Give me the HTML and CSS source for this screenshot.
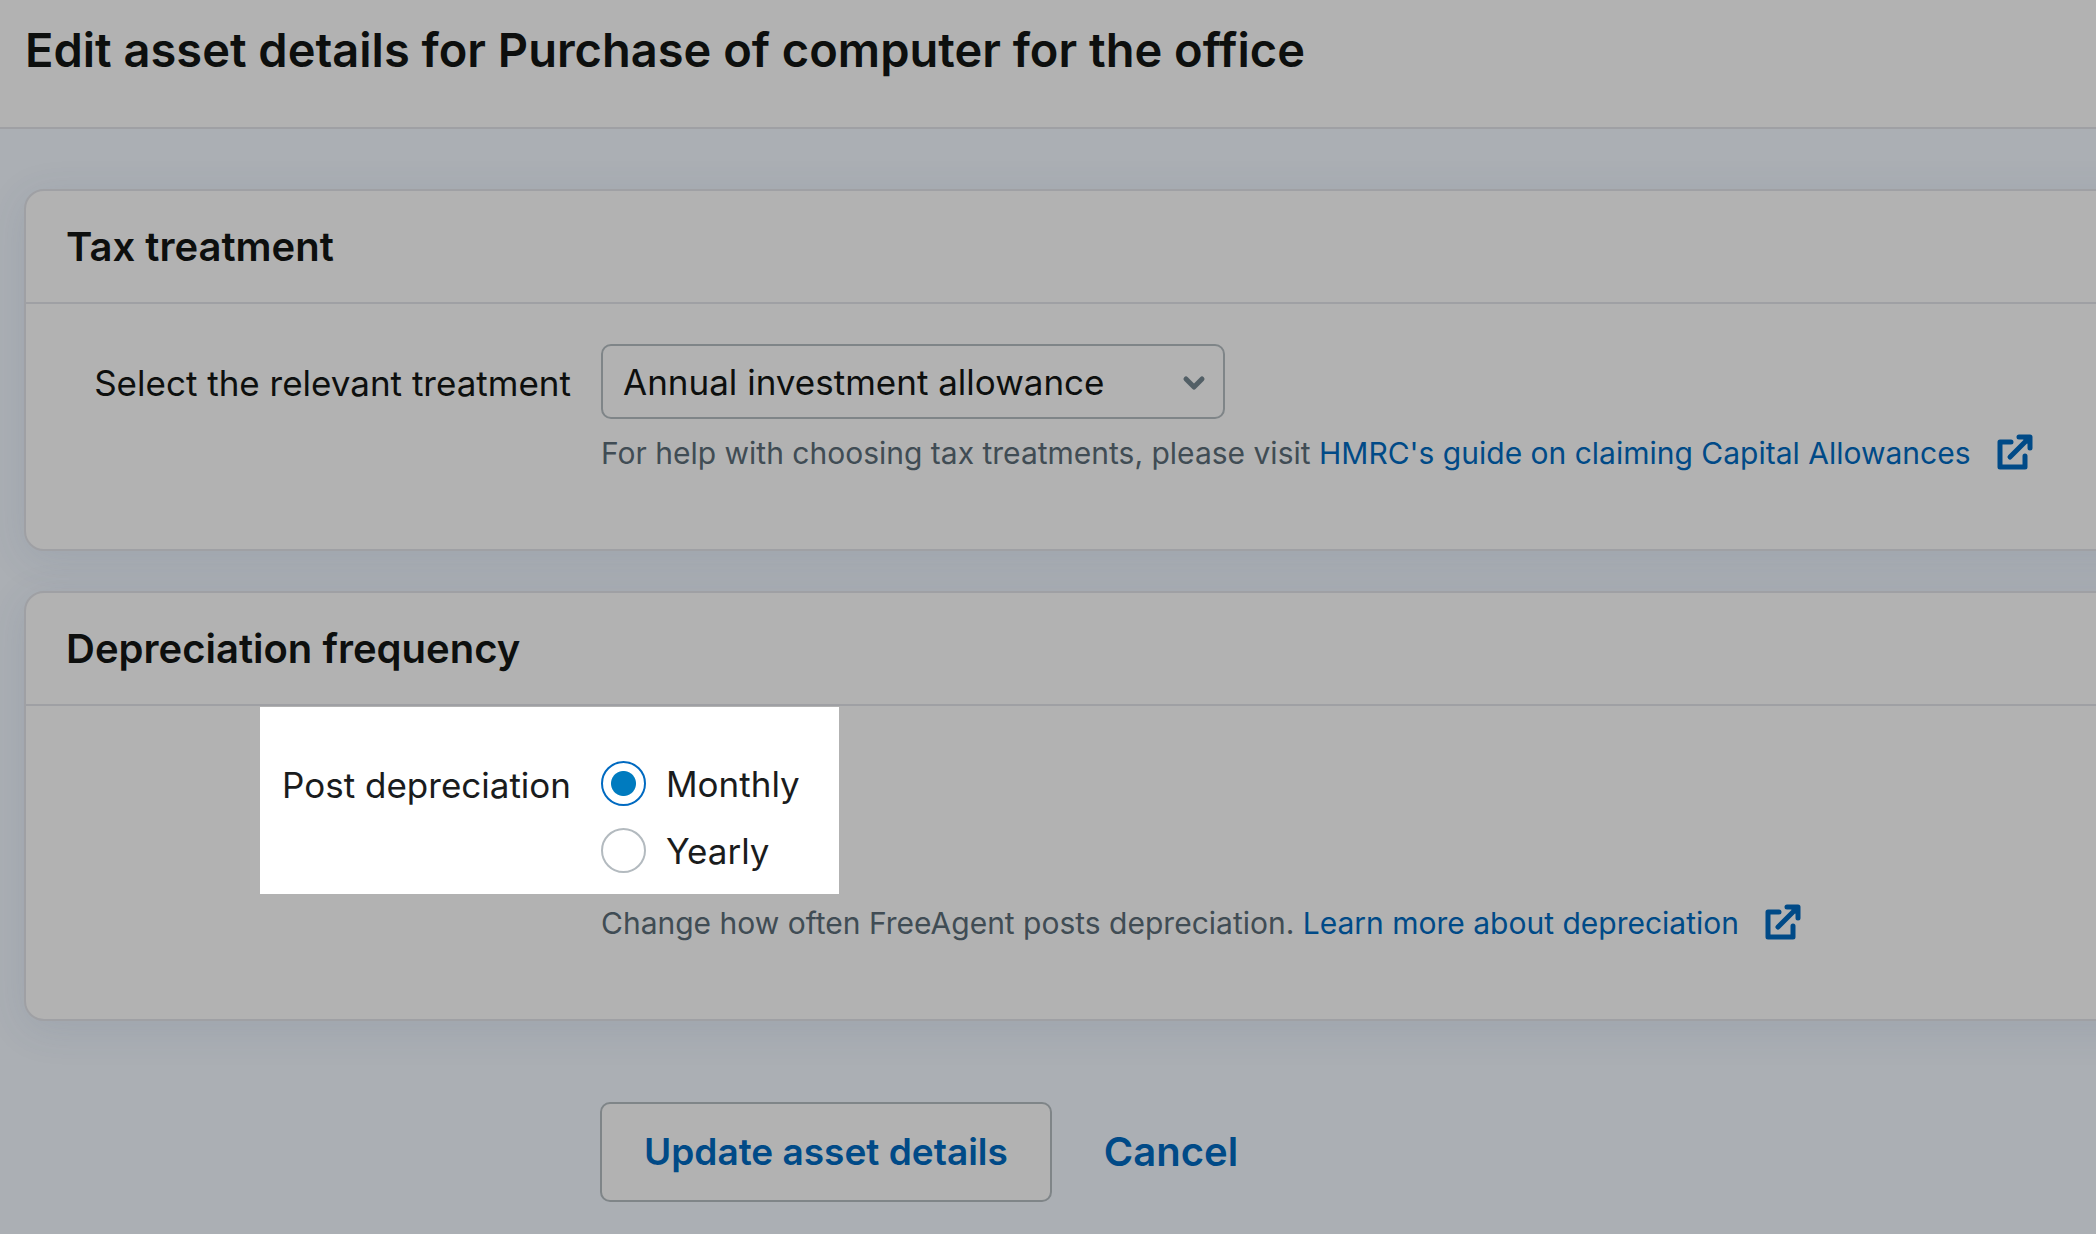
FILE: index.html
```html
<!DOCTYPE html>
<html lang="en">
<head>
    <meta charset="UTF-8">
    <meta name="viewport" content="width=device-width, initial-scale=1.0">
    <title>Edit asset details</title>
    <link rel="stylesheet" href="styles.css">
</head>
<body>
    <header class="page-header">
        <h1>Edit asset details for Purchase of computer for the office</h1>
    </header>

    <form class="asset-form">
        <section class="card">
            <h2>Tax treatment</h2>
            <div class="card-body first">
                <div class="row">
                    <label for="treatment">Select the relevant treatment</label>
                    <div class="select">
                        <select id="treatment">
                            <option>Annual investment allowance</option>
                        </select>
                        <svg class="chevron" width="24" height="16" viewBox="0 0 24 16"><path d="M4 4l8 8 8-8"/></svg>
                    </div>
                </div>
                <p class="help">
                    For help with choosing tax treatments, please visit
                    <a href="#">HMRC's guide on claiming Capital Allowances<svg class="external" width="36" height="36" viewBox="0 0 36 36"><path d="M14 8H3V33H28V22M13 23L30 6M22 3H33V14"/><path class="tip" d="M24 3h9v9z"/></svg></a>
                </p>
            </div>
        </section>

        <section class="card">
            <h2>Depreciation frequency</h2>
            <div class="card-body">
                <div class="highlight" role="radiogroup" aria-labelledby="post">
                    <span id="post" class="group-label">Post depreciation</span>
                    <div class="options">
                        <label><input type="radio" name="frequency" checked>Monthly</label>
                        <label><input type="radio" name="frequency">Yearly</label>
                    </div>
                </div>
                <p class="help">
                    Change how often FreeAgent posts depreciation.
                    <a href="#">Learn more about depreciation<svg class="external" width="36" height="36" viewBox="0 0 36 36"><path d="M14 8H3V33H28V22M13 23L30 6M22 3H33V14"/><path class="tip" d="M24 3h9v9z"/></svg></a>
                </p>
            </div>
        </section>

        <div class="actions">
            <button type="submit">Update asset details</button>
            <a href="#">Cancel</a>
        </div>
    </form>
</body>
</html>
```
FILE: styles.css
```css
* {
    box-sizing: border-box;
}
body {
    margin: 0;
    background: #abafb4;
    color: #0d0f0e;
    font-family: Inter, "Liberation Sans", sans-serif;
    font-size: 35px;
    line-height: 44px;
    overflow-x: hidden;
}
h1, h2, p {
    margin: 0;
}
a {
    color: #004a87;
    text-decoration: none;
}
.page-header {
    padding: 18px 25px 45px;
    background: #b2b2b2;
    border-bottom: 2px solid #9fa0a4;
}
h1 {
    font-size: 47px;
    line-height: 64px;
    font-weight: 600;
}
.asset-form {
    padding: 60px 0 32px 24px;
}

/* cards run off the right edge of the window */
.card {
    margin: 0 -60px 40px 0;
    background: #b2b2b2;
    border: 2px solid #9fa0a4;
    border-radius: 20px;
    box-shadow: 0 8px 40px rgba(60, 85, 120, 0.12);
}
h2 {
    padding: 34px 40px 33px;
    border-bottom: 2px solid #9fa0a4;
    font-size: 40px;
    line-height: 44px;
    font-weight: 600;
}
.card-body {
    padding: 1px 0 74px;
}
.card-body.first {
    padding-top: 40px;
}
.row {
    display: grid;
    grid-template-columns: 545px 1fr;
    column-gap: 30px;
    align-items: center;
    margin-bottom: 12px;
}
.row label {
    padding-top: 2px;
    text-align: right;
}
.select {
    position: relative;
    width: 624px;
}
select {
    appearance: none;
    display: block;
    width: 100%;
    height: 75px;
    padding: 0 60px 0 20px;
    border: 2px solid #7f8588;
    border-radius: 10px;
    background: transparent;
    color: inherit;
    font: inherit;
}
.chevron {
    position: absolute;
    right: 19px;
    top: 31px;
    fill: none;
    stroke: #525f66;
    stroke-width: 5;
    stroke-linecap: round;
    stroke-linejoin: round;
    pointer-events: none;
}
.help {
    margin-left: 575px;
    color: #404c54;
    font-size: 30px;
}
.external {
    margin-left: 26px;
    vertical-align: -6px;
    fill: none;
    stroke: currentColor;
    stroke-width: 5;
    stroke-linecap: round;
    stroke-linejoin: round;
}
.external .tip {
    fill: currentColor;
    stroke: none;
}

.highlight {
    display: grid;
    grid-template-columns: 311px 1fr;
    column-gap: 30px;
    width: 579px;
    margin: 0 0 7px 234px;
    padding: 54px 0 21px;
    background: #fff;
    color: #1a1c1d;
}
.group-label {
    padding-top: 2px;
    text-align: right;
}
.options {
    display: flex;
    flex-direction: column;
    gap: 22px;
}
.options label {
    display: flex;
    align-items: center;
    gap: 20px;
    height: 45px;
}
input[type="radio"] {
    appearance: none;
    width: 45px;
    height: 45px;
    margin: 0;
    border: 2px solid #b3babf;
    border-radius: 50%;
}
input[type="radio"]:checked {
    border-color: #006ac1;
    background: radial-gradient(circle, #007bbf 12px, transparent 13px);
}

.actions {
    display: flex;
    align-items: center;
    gap: 52px;
    margin: 81px 0 0 576px;
    font-weight: 600;
}
button {
    height: 100px;
    padding: 0 42px;
    border: 2px solid #7f8588;
    border-radius: 10px;
    background: #b2b2b2;
    color: #004a87;
    font: inherit;
    font-size: 37px;
}
.actions a {
    font-size: 40px;
}
```
